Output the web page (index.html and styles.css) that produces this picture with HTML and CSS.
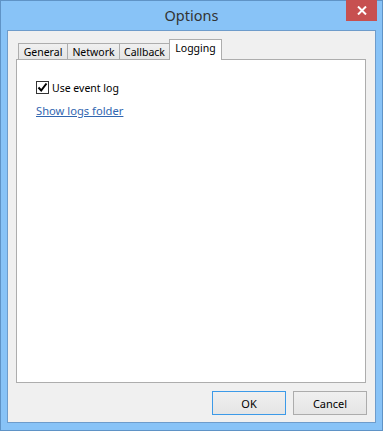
FILE: index.html
```html
<!DOCTYPE html>
<html lang="en">
<head>
  <meta charset="UTF-8">
  <title>Options</title>
  <link rel="stylesheet" href="styles.css">
</head>
<body>

  <!-- Dialog window -->
  <div class="window">
    <div class="titlebar">
      <span class="title">Options</span>
      <button class="close" aria-label="Close">
        <svg width="10" height="9" viewBox="0 0 10 9">
          <path d="M1 0.5 L9 8.5 M9 0.5 L1 8.5" stroke="#fff" stroke-width="2"/>
        </svg>
      </button>
    </div>

    <div class="client">
      <!-- Tabs -->
      <div class="tabs">
        <div class="tab tab-general">General</div>
        <div class="tab tab-network">Network</div>
        <div class="tab tab-callback">Callback</div>
        <div class="tab tab-logging active">Logging</div>
      </div>

      <div class="panel">
        <label class="check">
          <span class="box">
            <svg width="11" height="11" viewBox="0 0 11 11">
              <path d="M1.5 5.5 L4.2 8.5 L9.5 1.5" fill="none" stroke="#000" stroke-width="2"/>
            </svg>
          </span>
          Use event log
        </label>
        <a class="link" href="#">Show logs folder</a>
      </div>

      <!-- Dialog buttons -->
      <div class="buttons">
        <button class="btn default">OK</button>
        <button class="btn">Cancel</button>
      </div>
    </div>
  </div>

</body>
</html>
```

FILE: styles.css
```css
body {
  margin: 0;
  background: #88c3f7;
  font-family: 'Noto Sans', sans-serif;
}
.window {
  width: 383px;
  height: 431px;
  box-sizing: border-box;
  background: #88c3f7;
  border: 1px solid #5f93c6;
  padding: 0 6px 7px 6px;
  display: flex;
  flex-direction: column;
}
.titlebar {
  height: 29px;
  position: relative;
  display: flex;
  align-items: center;
  justify-content: center;
}
.title {
  font-size: 14.5px;
  color: #333;
  margin-top: -1px;
}
.close {
  position: absolute;
  top: -1px;
  right: -1px;
  width: 31px;
  height: 21px;
  border: none;
  padding: 0;
  background: #c75050;
  display: flex;
  align-items: center;
  justify-content: center;
}
.client {
  flex: 1;
  background: #f0f0f0;
  border: 1px solid #6e9ccb;
  padding: 8px 0 0 8px;
  display: flex;
  flex-direction: column;
}
.tabs {
  display: flex;
  height: 20px;
  padding-left: 2px;
  align-items: flex-end;
  font-size: 10.5px;
  color: #000;
}
.tab {
  height: 16px;
  box-sizing: border-box;
  border: 1px solid #adadad;
  border-bottom: none;
  background: linear-gradient(#f0f0f0, #e5e5e5);
  margin-right: -1px;
  text-align: center;
  line-height: 16px;
}
.tab-general { width: 50px; }
.tab-network { width: 53px; }
.tab-callback { width: 51px; }
.tab-logging { width: 53px; }
.tab.active {
  height: 21px;
  margin-bottom: -1px;
  background: #fff;
  position: relative;
  z-index: 1;
  line-height: 16px;
}
.panel {
  width: 350px;
  height: 324px;
  box-sizing: border-box;
  background: #fff;
  border: 1px solid #adadad;
  padding: 21px 0 0 19px;
  font-size: 10.5px;
}
.check {
  display: flex;
  align-items: center;
  height: 13px;
}
.box {
  width: 13px;
  height: 13px;
  box-sizing: border-box;
  border: 1px solid #333;
  background: #fff;
  display: flex;
  align-items: center;
  justify-content: center;
  margin-right: 3px;
}
.link {
  display: inline-block;
  margin-top: 9px;
  font-size: 11.2px;
  color: #3166b0;
  text-decoration: underline;
}
.buttons {
  display: flex;
  justify-content: flex-end;
  gap: 7px;
  padding: 8px 8px 0 0;
}
.btn {
  width: 74px;
  height: 24px;
  border: 1px solid #acacac;
  background: linear-gradient(#f0f0f0, #e5e5e5);
  font-family: 'Noto Sans', sans-serif;
  font-size: 11px;
  color: #000;
  padding: 0;
}
.btn.default {
  border-color: #3c9ae8;
}
```
